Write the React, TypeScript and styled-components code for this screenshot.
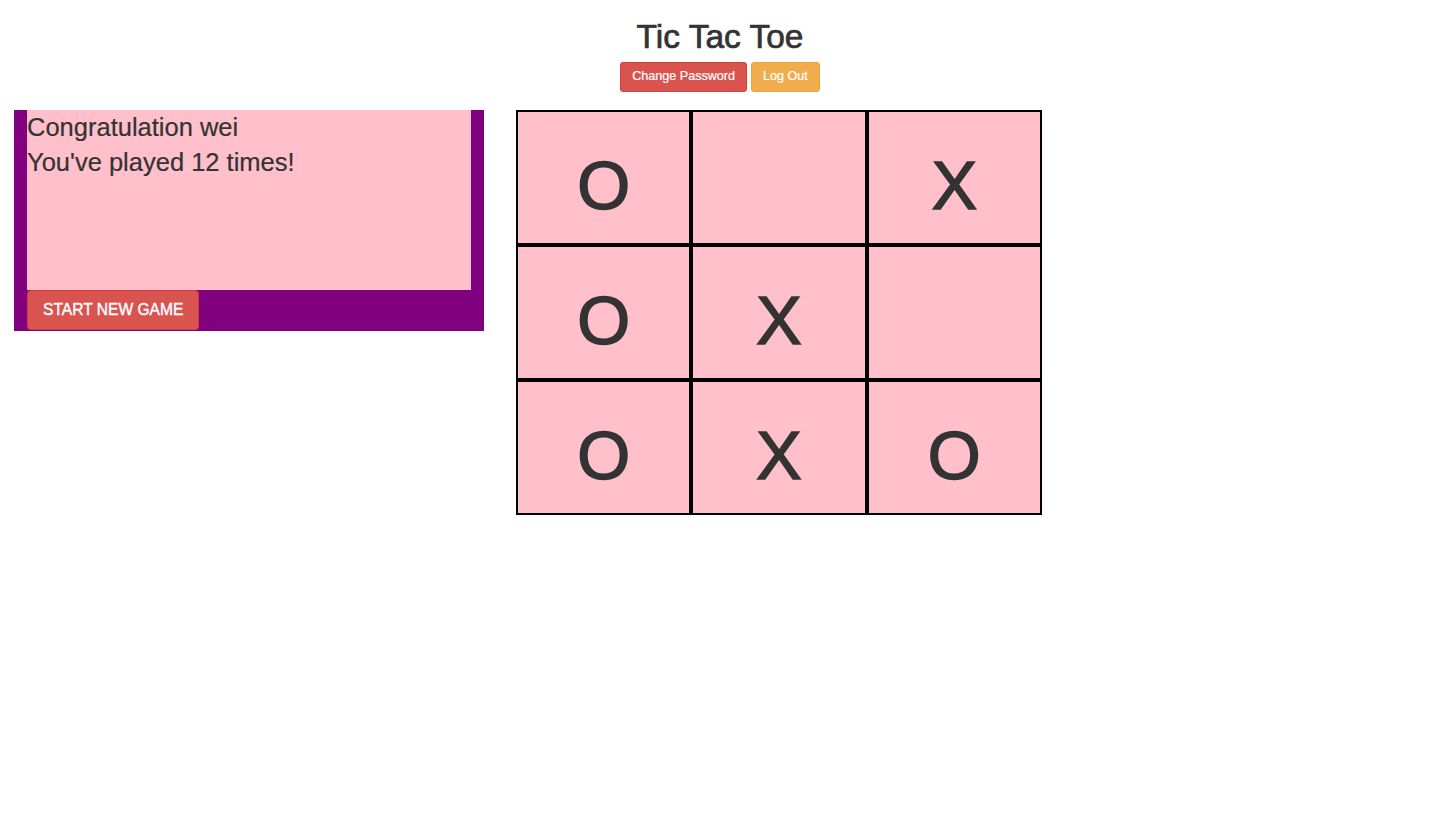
import React from "react";
import styled, { createGlobalStyle } from "styled-components";

const GlobalStyle = createGlobalStyle`
  html, body {
    margin: 0;
    padding: 0;
    background: #ffffff;
    font-family: "Liberation Sans", Arial, Helvetica, sans-serif;
    color: #333333;
  }
`;

const Page = styled.div`
  display: flex;
  flex-direction: column;
`;

const Header = styled.header`
  display: flex;
  flex-direction: column;
  align-items: center;
`;

const Title = styled.h1`
  margin: 19px 0 6px;
  font-size: 33.5px;
  font-weight: 400;
  line-height: 1.1;
  color: #333333;
  -webkit-text-stroke: 0.7px #333333;
`;

const ButtonRow = styled.div`
  display: flex;
  gap: 4px;
`;

const SmallButton = styled.button<{ $variant: "danger" | "warning" }>`
  height: 30px;
  padding: 0 11px;
  font-family: "Liberation Sans", Arial, sans-serif;
  font-size: 12.6px;
  line-height: 1.5;
  color: #ffffff;
  border-radius: 3px;
  cursor: pointer;
  background: ${(p) => (p.$variant === "danger" ? "#d9534f" : "#f0ad4e")};
  border: 1px solid ${(p) => (p.$variant === "danger" ? "#d43f3a" : "#eea236")};
  -webkit-text-stroke: 0.2px #ffffff;
`;

const Main = styled.main`
  display: flex;
  align-items: flex-start;
  gap: 32px;
  padding-left: 14px;
  margin-top: 18px;
`;

const InfoPanel = styled.section`
  width: 470px;
  box-sizing: border-box;
  background: #800080;
  padding: 0 13px 1px;
  display: flex;
  flex-direction: column;
  align-items: flex-start;
`;

const MessageBox = styled.div`
  align-self: stretch;
  height: 180px;
  background: #ffc0cb;
`;

const MessageLine = styled.div`
  font-size: 25.5px;
  line-height: 35px;
  color: #333333;
  -webkit-text-stroke: 0.2px #333333;
`;

const StartButton = styled.button`
  height: 40px;
  padding: 0 15px;
  font-family: "Liberation Sans", Arial, sans-serif;
  font-size: 15.6px;
  color: #ffffff;
  background: #d9534f;
  border: 1px solid #d43f3a;
  border-radius: 4px;
  cursor: pointer;
  -webkit-text-stroke: 0.4px #ffffff;
`;

const Board = styled.div`
  display: grid;
  grid-template-columns: repeat(3, 175.33px);
  grid-template-rows: repeat(3, 135px);
`;

const Cell = styled.div`
  box-sizing: border-box;
  border: 2px solid #000000;
  background: #ffc0cb;
  text-align: center;
  padding-top: 34px;
  font-size: 68px;
  line-height: 1.15;
  color: #333333;
  -webkit-text-stroke: 1.6px #333333;
`;

const cells = ["O", "", "X", "O", "X", "", "O", "X", "O"];

export default function App() {
  return (
    <Page>
      <GlobalStyle />
      <Header>
        <Title>Tic Tac Toe</Title>
        <ButtonRow>
          <SmallButton $variant="danger">Change Password</SmallButton>
          <SmallButton $variant="warning">Log Out</SmallButton>
        </ButtonRow>
      </Header>
      <Main>
        <InfoPanel>
          <MessageBox>
            <MessageLine>Congratulation wei</MessageLine>
            <MessageLine>You've played 12 times!</MessageLine>
          </MessageBox>
          <StartButton>START NEW GAME</StartButton>
        </InfoPanel>
        <Board>
          {cells.map((v, i) => (
            <Cell key={i}>{v}</Cell>
          ))}
        </Board>
      </Main>
    </Page>
  );
}
